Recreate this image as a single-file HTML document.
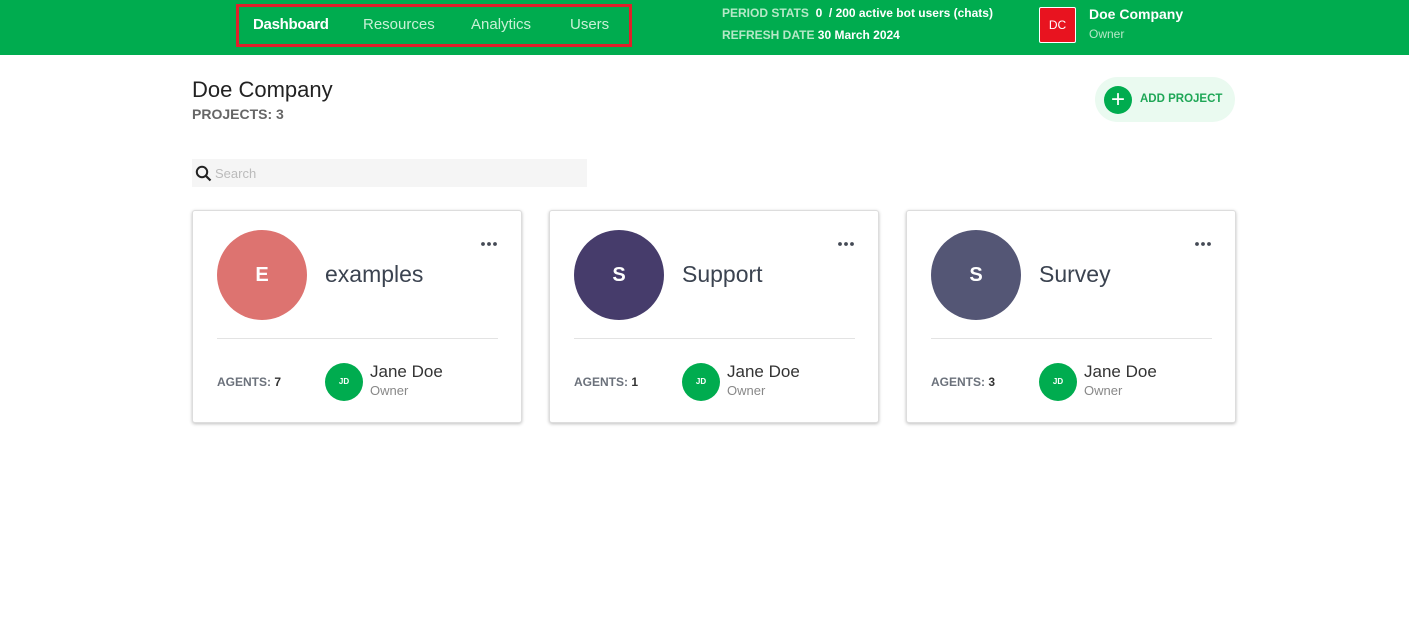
<!DOCTYPE html>
<html><head><style>
*{box-sizing:border-box;margin:0;padding:0}
body{width:1409px;height:641px;background:#fff;font-family:"Liberation Sans",Arial,sans-serif;position:relative;overflow:hidden}
.top{position:absolute;left:0;top:0;width:1409px;height:55px;background:#00ac4f}
.navbox{position:absolute;left:236px;top:4px;width:396px;height:43px;border:3px solid #e0202a}
.nav{position:absolute;top:16px;font-size:15px;color:#c8f0d6}
.stat{position:absolute;font-size:12px;color:#b5e8c7;font-weight:bold}
.stat b{color:#fff}
.dc{position:absolute;left:1039px;top:7px;width:37px;height:36px;background:#e8131f;border:1px solid #fff;border-radius:2px;color:#fff;font-size:12px;text-align:center;line-height:34px}
.card{position:absolute;top:210px;width:330px;height:213px;border:1px solid #ddd;border-radius:3px;box-shadow:0 1px 3px rgba(0,0,0,.25);background:#fff}
.av{position:absolute;left:24px;top:19px;width:90px;height:90px;border-radius:50%;color:#fff;font-size:20px;font-weight:bold;text-align:center;line-height:90px}
.nm{position:absolute;left:132px;top:50px;font-size:23px;color:#3b4350}
.dots{position:absolute;left:287px;top:30px}
.hr{position:absolute;left:24px;right:23px;top:127px;border-top:1px solid #e3e3e3}
.ag{position:absolute;left:24px;top:164px;font-size:12px;color:#6b717b;font-weight:bold}
.ag b{color:#333}
.jd{position:absolute;left:132px;top:152px;width:38px;height:38px;border-radius:50%;background:#00ac4f;color:#fff;font-size:8px;text-align:center;line-height:38px;font-weight:bold}
.jn{position:absolute;left:177px;top:151px;font-size:17px;color:#333}
.ow{position:absolute;left:177px;top:172px;font-size:13px;color:#888}
</style></head><body>
<div class="top">
<div class="navbox"></div>
<div class="nav" style="left:253px;color:#fff;font-weight:bold;letter-spacing:-0.3px">Dashboard</div>
<div class="nav" style="left:363px">Resources</div>
<div class="nav" style="left:471px">Analytics</div>
<div class="nav" style="left:570px">Users</div>
<div class="stat" style="left:722px;top:6px">PERIOD STATS &nbsp;<b>0 &nbsp;/ 200 active bot users (chats)</b></div>
<div class="stat" style="left:722px;top:28px">REFRESH DATE <b>30 March 2024</b></div>
<div class="dc">DC</div>
<div style="position:absolute;left:1089px;top:6px;color:#fff;font-size:14px;font-weight:bold">Doe Company</div>
<div style="position:absolute;left:1089px;top:27px;color:#b5e8c7;font-size:12px">Owner</div>
</div>
<div style="position:absolute;left:192px;top:77px;font-size:22px;color:#222">Doe Company</div>
<div style="position:absolute;left:192px;top:106px;font-size:14px;color:#666;font-weight:bold">PROJECTS: 3</div>
<div style="position:absolute;left:1095px;top:77px;width:140px;height:45px;border-radius:23px;background:#eafaf0"></div>
<div style="position:absolute;left:1104px;top:86px;width:28px;height:28px;border-radius:50%;background:#00ac4f;color:#fff;font-size:24px;text-align:center;line-height:27px">+</div>
<div style="position:absolute;left:1140px;top:93px;font-size:11.5px;color:#1ea656;font-weight:bold">ADD PROJECT</div>
<div style="position:absolute;left:192px;top:159px;width:395px;height:28px;background:#f5f5f5"></div>
<svg style="position:absolute;left:195px;top:165px" width="17" height="17" viewBox="0 0 17 17"><circle cx="7" cy="7" r="5.2" fill="none" stroke="#222" stroke-width="2"/><path d="M11 11l4.5 4.5" stroke="#222" stroke-width="2.2"/></svg>
<div style="position:absolute;left:215px;top:166px;font-size:13px;color:#bbb">Search</div>

<div class="card" style="left:192px"><div class="av" style="background:#dd7370">E</div><div class="nm">examples</div><svg class="dots" width="18" height="6"><circle cx="3" cy="3" r="1.9" fill="#444a55"/><circle cx="9" cy="3" r="1.9" fill="#444a55"/><circle cx="15" cy="3" r="1.9" fill="#444a55"/></svg><div class="hr"></div><div class="ag">AGENTS: <b>7</b></div><div class="jd">JD</div><div class="jn">Jane Doe</div><div class="ow">Owner</div></div>
<div class="card" style="left:549px"><div class="av" style="background:#463c6b">S</div><div class="nm">Support</div><svg class="dots" width="18" height="6"><circle cx="3" cy="3" r="1.9" fill="#444a55"/><circle cx="9" cy="3" r="1.9" fill="#444a55"/><circle cx="15" cy="3" r="1.9" fill="#444a55"/></svg><div class="hr"></div><div class="ag">AGENTS: <b>1</b></div><div class="jd">JD</div><div class="jn">Jane Doe</div><div class="ow">Owner</div></div>
<div class="card" style="left:906px"><div class="av" style="background:#545675">S</div><div class="nm">Survey</div><svg class="dots" width="18" height="6"><circle cx="3" cy="3" r="1.9" fill="#444a55"/><circle cx="9" cy="3" r="1.9" fill="#444a55"/><circle cx="15" cy="3" r="1.9" fill="#444a55"/></svg><div class="hr"></div><div class="ag">AGENTS: <b>3</b></div><div class="jd">JD</div><div class="jn">Jane Doe</div><div class="ow">Owner</div></div>
</body></html>
